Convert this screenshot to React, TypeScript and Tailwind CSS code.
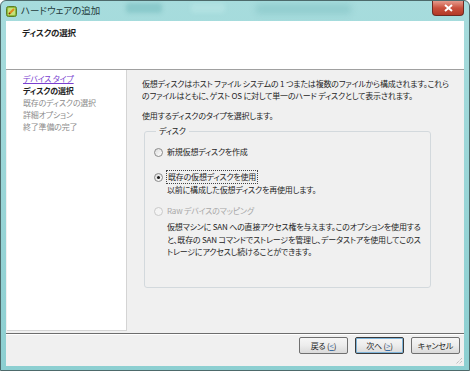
import React from "react";

const jp = "font-['Noto_Sans_CJK_JP','Noto_Sans',sans-serif] [font-feature-settings:'palt']";

// small radio like the classic Windows one
function Radio({ checked, disabled }: { checked?: boolean; disabled?: boolean }) {
    return (
        <span
            className={
                "relative inline-block h-[9px] w-[9px] shrink-0 rounded-full border " +
                (disabled
                    ? "border-[#c9c9c9] bg-[#f4f4f4]"
                    : "border-[#8a8a8a] bg-gradient-to-br from-[#dcdcdc] to-[#ffffff]")
            }
        >
            {checked && (
                <span className="absolute left-[2px] top-[2px] h-[3px] w-[3px] rounded-full bg-[#1a1a1a]" />
            )}
        </span>
    );
}

function Btn({ children, primary }: { children: React.ReactNode; primary?: boolean }) {
    return (
        <div
            className={
                "flex h-[17px] w-[49px] items-center justify-center rounded-[2px] border bg-gradient-to-b from-[#f6f6f6] via-[#ececec] to-[#dadada] text-[8px] text-[#1e1e1e] " +
                (primary ? "border-[#3a3a3a] shadow-[inset_0_0_0_1px_#7fb4d9]" : "border-[#707070]")
            }
        >
            {children}
        </div>
    );
}

export default function App() {
    return (
        <div className={"relative flex h-[371px] w-[470px] flex-col overflow-hidden rounded-t-[6px] border border-[#4d6a6b] bg-gradient-to-b from-[#a7dcdd] to-[#8ccfd1] " + jp}>
            {/* blurred glass shapes behind title bar */}
            <div className="absolute left-[125px] top-[2px] h-[10px] w-[36px] rounded-[2px] bg-[#6fb7b9] opacity-50 blur-[2px]" />
            <div className="absolute left-[190px] top-[2px] h-[10px] w-[34px] rounded-[2px] bg-[#b9e6e6] opacity-60 blur-[2px]" />
            <div className="absolute left-[255px] top-[3px] h-[10px] w-[95px] rounded-[2px] bg-[#75b9bb] opacity-40 blur-[3px]" />

            {/* title bar */}
            <div className="relative flex h-[20px] shrink-0 items-center pl-[5px]">
                <svg width="11" height="11" viewBox="0 0 11 11">
                    <rect x="0.5" y="0.5" width="10" height="10" rx="2" fill="#8dbb3c" stroke="#5d7f24" />
                    <rect x="2" y="2" width="7" height="7" rx="1" fill="#c6e07a" />
                    <path d="M3 8 L8 3" stroke="#e08a1e" strokeWidth="2" />
                    <path d="M3 8 L4 7" stroke="#6d3b0c" strokeWidth="1.5" />
                </svg>
                <span className="ml-[4px] text-[9.5px] leading-none text-[#1f3b3c]">ハードウェアの追加</span>
                <div className="absolute right-[5px] top-0 flex h-[15px] w-[32px] items-center justify-center rounded-b-[4px] border border-t-0 border-[#6e2a22] bg-gradient-to-b from-[#e59a8c] via-[#c9503d] to-[#b33a27]">
                    <svg width="9" height="8" viewBox="0 0 9 8">
                        <path d="M1 1 L8 7 M8 1 L1 7" stroke="#ffffff" strokeWidth="2" />
                    </svg>
                </div>
            </div>

            {/* client */}
            <div className="mx-[5px] flex flex-1 flex-col bg-[#f0f0f0] text-[8px] tracking-[-0.2px] text-[#1e1e1e]">
                {/* header */}
                <div className="h-[49px] shrink-0 border-b border-[#a0a0a0] bg-white pl-[16px] pt-[5px]">
                    <div className="text-[8.5px] font-bold leading-[12px]">ディスクの選択</div>
                </div>

                {/* middle */}
                <div className="flex h-[263px] shrink-0">
                    <div className="ml-[1px] mb-[2px] w-[120px] shrink-0 whitespace-nowrap border-r border-b border-[#d4d4d4] bg-white pl-[16px] pt-[3px] leading-[12px]">
                        <div className="text-[#7a3fd0] underline">デバイス タイプ</div>
                        <div className="font-bold">ディスクの選択</div>
                        <div className="text-[#8c8c8c]">既存のディスクの選択</div>
                        <div className="text-[#8c8c8c]">詳細オプション</div>
                        <div className="text-[#8c8c8c]">終了準備の完了</div>
                    </div>

                    <div className="min-w-0 flex-1 overflow-hidden whitespace-nowrap pl-[15px] pt-[8px] leading-[12px]">
                        <p>
                            仮想ディスクはホスト ファイル システムの 1 つまたは複数のファイルから構成されます。これら
                            <br />
                            のファイルはともに、ゲスト OS に対して単一のハード ディスクとして表示されます。
                        </p>
                        <p className="mt-[8px]">使用するディスクのタイプを選択します。</p>

                        <fieldset className="mt-[3px] ml-[2px] w-[287px] rounded-[3px] border border-[#d3d9dd] pb-[28px] pl-[9px]">
                            <legend className="ml-[2px] px-[3px] leading-[12px]">ディスク</legend>

                            <div className="mt-[9px] flex h-[12px] items-center gap-[4px]">
                                <Radio />
                                <span>新規仮想ディスクを作成</span>
                            </div>

                            <div className="mt-[12px] flex h-[14px] items-center gap-[3px]">
                                <Radio checked />
                                <span className="border border-dotted border-[#444] px-[1px] leading-[12px]">既存の仮想ディスクを使用</span>
                            </div>
                            <div className="pl-[13px]">以前に構成した仮想ディスクを再使用します。</div>

                            <div className="mt-[9px] flex h-[12px] items-center gap-[4px]">
                                <Radio disabled />
                                <span className="text-[#a8a8a8]">Raw デバイスのマッピング</span>
                            </div>
                            <div className="mt-[4px] pl-[13px] leading-[12.5px]">
                                仮想マシンに SAN への直接アクセス権を与えます。このオプションを使用する
                                <br />
                                と、既存の SAN コマンドでストレージを管理し、データストアを使用してこのス
                                <br />
                                トレージにアクセスし続けることができます。
                            </div>
                        </fieldset>
                    </div>
                </div>

                {/* footer */}
                <div className="relative flex flex-1 justify-end gap-[7px] border-t border-[#6d6d6d] pr-[4px] pt-[3px] shadow-[inset_0_1px_0_#ffffff]">
                    <Btn>
                        戻る (<span className="text-[#3a6ea5] underline">&lt;</span>)
                    </Btn>
                    <Btn primary>
                        次へ (<span className="text-[#3a6ea5] underline">&gt;</span>)
                    </Btn>
                    <Btn>キャンセル</Btn>
                    <svg className="absolute bottom-[1px] right-[1px]" width="9" height="9" viewBox="0 0 9 9">
                        <path d="M8 2 L2 8 M8 5 L5 8 M8 8 L8 8" stroke="#a9a9a9" strokeWidth="1" strokeDasharray="1 1" />
                    </svg>
                </div>
            </div>
            <div className="h-[4px] shrink-0" />
        </div>
    );
}
